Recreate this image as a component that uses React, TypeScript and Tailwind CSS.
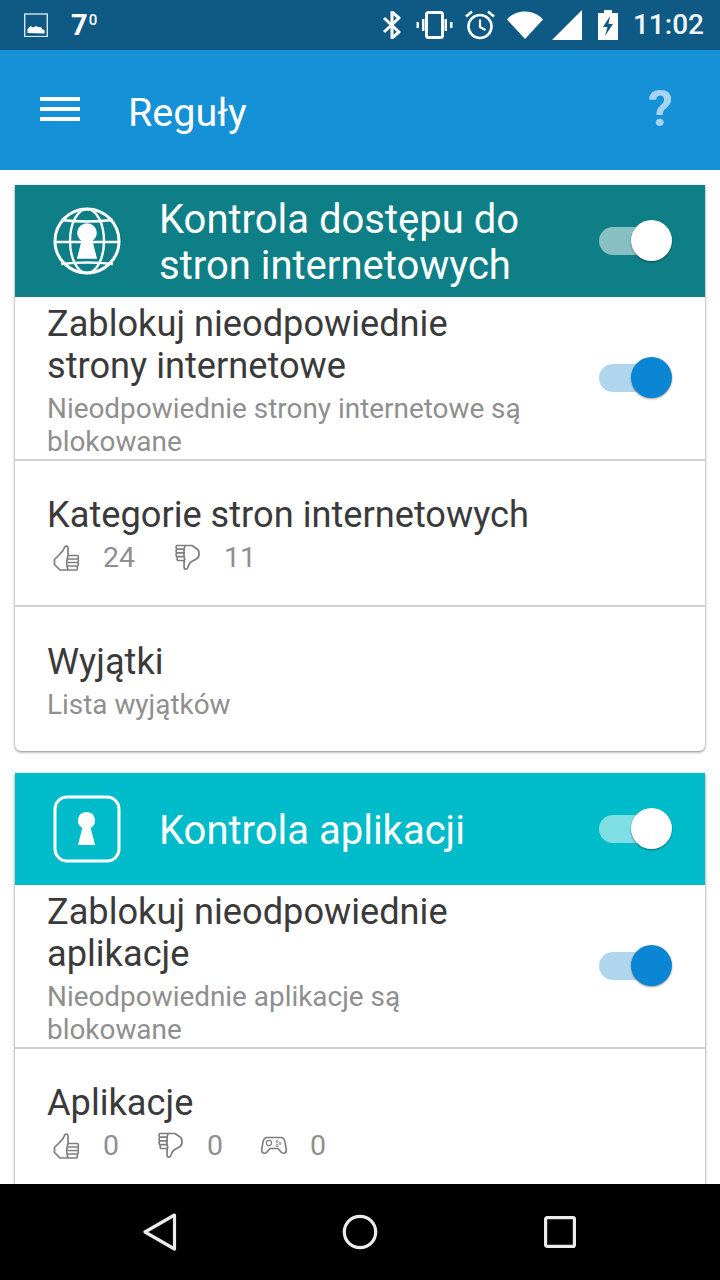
const font = { fontFamily: "Roboto, sans-serif" };

function Toggle({ thumb, track }: { thumb: string; track: string }) {
  return (
    <div className="relative h-[42px] w-[73px] shrink-0">
      <div className={`absolute left-0 top-[7px] h-[28px] w-[60px] rounded-full ${track}`} />
      <div className={`absolute right-0 top-0 h-[41px] w-[41px] rounded-full shadow-[0_1px_2px_rgba(0,0,0,0.4)] ${thumb}`} />
    </div>
  );
}

function Keyhole({ cx, cy }: { cx: number; cy: number }) {
  return (
    <path
      fill="#fff"
      d={`M${cx} ${cy - 16.5}a8.5 8.5 0 0 1 4.2 15.9L${cx + 8.5} ${cy + 16.5}H${cx - 8.5}L${cx - 4.2} ${cy - 0.6}A8.5 8.5 0 0 1 ${cx} ${cy - 16.5}Z`}
    />
  );
}

function Globe() {
  return (
    <svg width="70" height="70" viewBox="0 0 70 70" fill="none" stroke="#fff" strokeWidth="2.4" className="shrink-0">
      <circle cx="35" cy="35" r="32" strokeWidth="3" />
      <ellipse cx="35" cy="35" rx="17" ry="32" />
      <path d="M9 14Q35 17 61 14M3.500 36h63M9 58Q35 55 61 58" />
      <circle cx="35" cy="27" r="9.500" fill="#0e7f86" stroke="none" />
      <path d="M25 53L30 34h10l5 19z" fill="#0e7f86" stroke="none" />
      <Keyhole cx={35} cy={35} />
    </svg>
  );
}

function LockBox() {
  return (
    <svg width="70" height="70" viewBox="0 0 70 70" fill="none" className="shrink-0">
      <rect x="3" y="3" width="64" height="64" rx="12" stroke="#fff" strokeWidth="3" />
      <Keyhole cx={34.5} cy={34.5} />
    </svg>
  );
}

function ThumbUp() {
  return (
    <svg width="28" height="28" viewBox="0 0 28 28" fill="none" stroke="#7d7d7d" strokeWidth="1.700" strokeLinejoin="round" className="shrink-0">
      <path d="M15 11.500V4c0-2-2.600-2.600-3.400-.8-.9 2.600-2.600 5-4.600 6.800L1.500 15.500v5l5.500 5.500h8" />
      <path d="M15 11.500h9.500c1.200 0 1.200 3.500 0 3.500H15M15 15h9.500c1.200 0 1.200 3.500 0 3.500H15M15 18.500h9.500c1.200 0 1.200 3.500 0 3.500H15M15 22h8.500c1.200 0 1.200 4 0 4H15" />
      <path d="M15 11.500c-1.500 4.500-1.500 10 0 14.500" />
    </svg>
  );
}

function ThumbDown() {
  return (
    <svg width="28" height="28" viewBox="0 0 28 28" fill="none" stroke="#7d7d7d" strokeWidth="1.700" strokeLinejoin="round" className="shrink-0">
      <path d="M11 1.500h7l5 3.500c2.700 1.500 2.700 8 0 9.500l-6 3.500c-2 1.500-2.500 4-3.500 6.200-.9 1.700-3.400 1-3.400-.8V16.500" />
      <path d="M11 1.500H3c-1.200 0-1.200 3.700 0 3.700h8M3 5.200c-1.200 0-1.200 3.700 0 3.700h8M3 8.900c-1.200 0-1.200 3.700 0 3.700h8M4 12.600c-1.200 0-1.200 3.900 0 3.900h7" />
      <path d="M11 1.500c-1.500 4.800-1.500 10.200 0 15" />
    </svg>
  );
}

function Gamepad() {
  return (
    <svg width="28" height="28" viewBox="0 0 28 28" fill="none" stroke="#7d7d7d" strokeWidth="1.600" strokeLinejoin="round" className="shrink-0">
      <path d="M7 5.500h14c2.500 0 3.500 2 4 4.500l1.300 8c.4 3-3.300 4.300-5.300 2l-3-3.500h-8L7 20c-2 2.300-5.700 1-5.300-2L3 10c.5-2.500 1.500-4.500 4-4.500z" />
      <circle cx="9" cy="11" r="2.600" strokeWidth="1.100" />
      <circle cx="17" cy="9.500" r="1" strokeWidth="0.900" />
      <circle cx="20" cy="11.500" r="1" strokeWidth="0.900" />
      <circle cx="17" cy="13.500" r="1" strokeWidth="0.900" />
    </svg>
  );
}

function Header({ bg, icon, title, track }: { bg: string; icon: React.ReactNode; title: React.ReactNode; track: string }) {
  return (
    <div className={`flex h-[112px] items-center pl-[37px] pr-[33px] ${bg}`}>
      {icon}
      <div className="ml-[37px] mt-[3px] flex-1 text-[40px] leading-[46px] text-white">{title}</div>
      <Toggle thumb="bg-white" track={track} />
    </div>
  );
}

function BlockRow({ title, sub }: { title: React.ReactNode; sub: React.ReactNode }) {
  return (
    <div className="flex h-[164px] items-start border-b-2 border-[#d0d0d0] pl-[32px] pr-[33px]">
      <div className="flex-1 pt-[6px]">
        <div className="text-[36.200px] leading-[42px] text-[#3a3a3a]">{title}</div>
        <div className="mt-[5px] text-[27.900px] leading-[33px] text-[#8f8f8f]">{sub}</div>
      </div>
      <div className="mt-[60px]">
        <Toggle thumb="bg-[#0b86d4]" track="bg-[#b0d6ee]" />
      </div>
    </div>
  );
}

function Stat({ icon, value, w }: { icon: React.ReactNode; value: string; w: string }) {
  return (
    <div className={`flex items-center ${w}`}>
      {icon}
      <span className="ml-[22px] text-[28.500px] leading-[34px] text-[#8f8f8f]">{value}</span>
    </div>
  );
}

export default function App() {
  return (
    <div className="flex h-[1280px] w-[720px] flex-col overflow-hidden bg-white" style={font}>
      <div className="flex h-[50px] shrink-0 items-center justify-between bg-[#0f5a85] pl-[24px] pr-[16px]">
        <div className="flex items-center">
          <svg width="24" height="24" viewBox="0 0 24 24" fill="none">
            <rect x="0.700" y="1" width="22.600" height="22.600" stroke="#d5e6f0" strokeWidth="1.400" />
            <path d="M3.500 20v-4l3-3 2.500 1.500 3-1.500 2 1 3 0 1.500 2.500 2 .5v3.500z" fill="#fff" />
          </svg>
          <span className="ml-[23px] text-[29px] font-bold leading-[34px] text-white">7</span>
          <span className="mb-[10px] ml-[1px] text-[15px] font-medium leading-[18px] text-white">0</span>
        </div>
        <div className="flex items-center">
          <svg width="20" height="28" viewBox="0 0 20 28" fill="none" stroke="#fff" strokeWidth="3">
            <path d="M2 7l15 14-7 6V1l7 6L2 21" strokeLinejoin="round" />
          </svg>
          <svg width="37" height="28" viewBox="0 0 37 28" fill="none" className="ml-[14px]">
            <rect x="10.500" y="1.500" width="16" height="25" rx="2" stroke="#fff" strokeWidth="3" />
            <path d="M6 8h2.500v12H6zM0.500 11H3v6H0.500zM28.500 8H31v12h-2.500zM34 11h2.500v6H34z" fill="#fff" />
          </svg>
          <svg width="30" height="30" viewBox="0 0 30 30" fill="none" stroke="#fff" className="ml-[12px]">
            <circle cx="15" cy="16.500" r="11.500" strokeWidth="2.600" />
            <path d="M15 9.500v7.500l5.500 3" strokeWidth="2.200" />
            <path d="M1 6.500L7 1.500M29 6.500L23 1.500" strokeWidth="2.600" />
          </svg>
          <svg width="36" height="28" viewBox="0 0 36 28" className="ml-[12px]">
            <path d="M0 8.500C4 3.500 11 .5 18 .5s14 3 18 8L18 28z" fill="#fff" />
          </svg>
          <svg width="30" height="30" viewBox="0 0 30 30" className="ml-[9px]">
            <path d="M30 0v30H0z" fill="#fff" />
          </svg>
          <svg width="20" height="30" viewBox="0 0 20 30" className="ml-[16px]">
            <path d="M6 0h8v3h6v27H0V3h6z" fill="#fff" />
            <path d="M12 6L5 17h4.500L7 26l8-12h-4.500z" fill="#0f5a85" />
          </svg>
          <span className="ml-[15px] text-[28px] font-medium leading-[34px] text-[#f0f5f8]">11:02</span>
        </div>
      </div>

      <div className="flex h-[120px] shrink-0 items-center bg-[#1591d8] pl-[40px] pr-[47px]">
        <div className="mb-[2px] flex w-[40px] flex-col gap-[6px]">
          <div className="h-[4px] bg-white" />
          <div className="h-[4px] bg-white" />
          <div className="h-[4px] bg-white" />
        </div>
        <div className="ml-[48px] mt-[6px] flex-1 text-[39.500px] leading-[44px] text-white">Reguły</div>
        <span className="mt-[-2px] text-[50px] font-bold leading-[50px] text-[#a6d4f1]">?</span>
      </div>

      <div className="min-h-0 flex-1 overflow-hidden bg-white px-[15px] pt-[15px]">
        <div className="overflow-hidden rounded-b-[6px] bg-white shadow-[0_1px_3px_rgba(0,0,0,0.5)]">
          <Header
            bg="bg-[#0e7f86]"
            icon={<Globe />}
            track="bg-[#87bfc2]"
            title={<>Kontrola dostępu do<br />stron internetowych</>}
          />
          <BlockRow
            title={<>Zablokuj nieodpowiednie<br />strony internetowe</>}
            sub={<>Nieodpowiednie strony internetowe są<br />blokowane</>}
          />
          <div className="h-[146px] border-b-2 border-[#d0d0d0] pl-[32px] pt-[33px]">
            <div className="text-[36.200px] leading-[42px] text-[#3a3a3a]">Kategorie stron internetowych</div>
            <div className="mt-[5px] flex items-center pl-[6px]">
              <Stat icon={<ThumbUp />} value="24" w="w-[121px]" />
              <Stat icon={<ThumbDown />} value="11" w="w-[100px]" />
            </div>
          </div>
          <div className="h-[144px] pl-[32px] pt-[34px]">
            <div className="text-[36.200px] leading-[42px] text-[#3a3a3a]">Wyjątki</div>
            <div className="mt-[5px] text-[27.900px] leading-[33px] text-[#8f8f8f]">Lista wyjątków</div>
          </div>
        </div>

        <div className="mt-[22px] bg-white shadow-[0_1px_3px_rgba(0,0,0,0.5)]">
          <Header
            bg="bg-[#00bcca]"
            icon={<LockBox />}
            track="bg-[#7fdde4]"
            title="Kontrola aplikacji"
          />
          <BlockRow
            title={<>Zablokuj nieodpowiednie<br />aplikacje</>}
            sub={<>Nieodpowiednie aplikacje są<br />blokowane</>}
          />
          <div className="h-[146px] pl-[32px] pt-[33px]">
            <div className="text-[36.200px] leading-[42px] text-[#3a3a3a]">Aplikacje</div>
            <div className="mt-[5px] flex items-center pl-[6px]">
              <Stat icon={<ThumbUp />} value="0" w="w-[104px]" />
              <Stat icon={<ThumbDown />} value="0" w="w-[103px]" />
              <Stat icon={<Gamepad />} value="0" w="w-[80px]" />
            </div>
          </div>
        </div>
      </div>

      <div className="flex h-[96px] shrink-0 items-center bg-black pl-[143px]">
        <svg width="34" height="38" viewBox="0 0 34 38" fill="none">
          <path d="M31.500 2L2 19l29.500 17z" stroke="#ececec" strokeWidth="3.200" strokeLinejoin="round" />
        </svg>
        <svg width="36" height="36" viewBox="0 0 36 36" fill="none" className="ml-[165px]">
          <circle cx="18" cy="18" r="15.700" stroke="#ececec" strokeWidth="3.200" />
        </svg>
        <svg width="32" height="32" viewBox="0 0 32 32" fill="none" className="ml-[166px]">
          <rect x="1.600" y="1.600" width="28.800" height="28.800" rx="1.500" stroke="#ececec" strokeWidth="3.200" />
        </svg>
      </div>
    </div>
  );
}
